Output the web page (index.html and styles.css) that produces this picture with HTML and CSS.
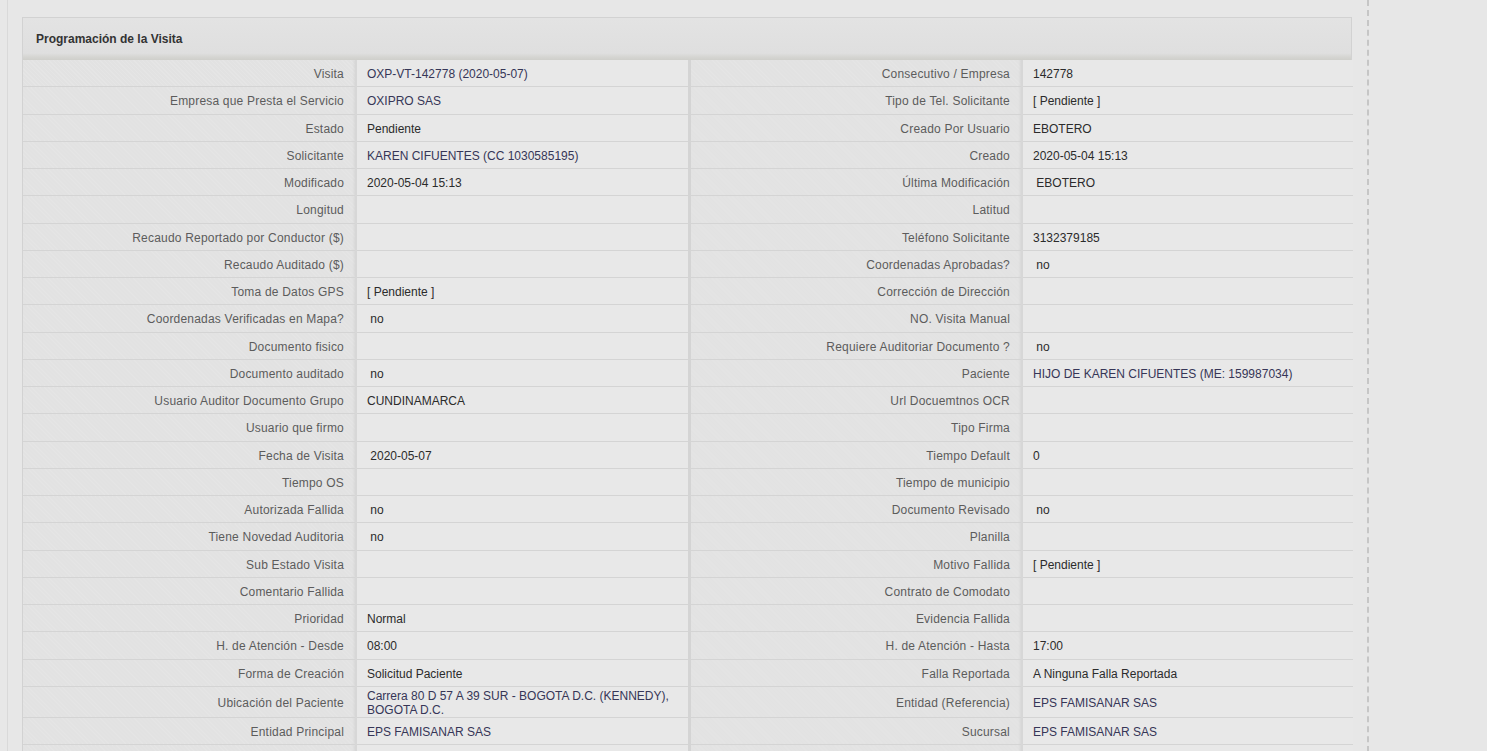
FILE: index.html
```html
<!DOCTYPE html>
<html lang="es">
<head>
    <meta charset="UTF-8">
    <meta name="viewport" content="width=device-width, initial-scale=1.0">
    <title>Programación de la Visita</title>
    <link rel="stylesheet" href="styles.css">
</head>
<body>
    <div class="page">
        <div class="panel">
            <div class="panel-header">Programación de la Visita</div>
            <table class="detail">
                <colgroup>
                    <col class="c1"><col class="c2"><col class="c3"><col class="c4">
                </colgroup>
                <tr>
                    <th>Visita</th><td class="link">OXP-VT-142778 (2020-05-07)</td>
                    <th>Consecutivo / Empresa</th><td>142778</td>
                </tr>
                <tr>
                    <th>Empresa que Presta el Servicio</th><td class="link">OXIPRO SAS</td>
                    <th>Tipo de Tel. Solicitante</th><td>[ Pendiente ]</td>
                </tr>
                <tr>
                    <th>Estado</th><td>Pendiente</td>
                    <th>Creado Por Usuario</th><td>EBOTERO</td>
                </tr>
                <tr>
                    <th>Solicitante</th><td class="link">KAREN CIFUENTES (CC 1030585195)</td>
                    <th>Creado</th><td>2020-05-04 15:13</td>
                </tr>
                <tr>
                    <th>Modificado</th><td>2020-05-04 15:13</td>
                    <th>Última Modificación</th><td>&nbsp;EBOTERO</td>
                </tr>
                <tr>
                    <th>Longitud</th><td></td>
                    <th>Latitud</th><td></td>
                </tr>
                <tr>
                    <th>Recaudo Reportado por Conductor ($)</th><td></td>
                    <th>Teléfono Solicitante</th><td>3132379185</td>
                </tr>
                <tr>
                    <th>Recaudo Auditado ($)</th><td></td>
                    <th>Coordenadas Aprobadas?</th><td>&nbsp;no</td>
                </tr>
                <tr>
                    <th>Toma de Datos GPS</th><td>[ Pendiente ]</td>
                    <th>Corrección de Dirección</th><td></td>
                </tr>
                <tr>
                    <th>Coordenadas Verificadas en Mapa?</th><td>&nbsp;no</td>
                    <th>NO. Visita Manual</th><td></td>
                </tr>
                <tr>
                    <th>Documento fisico</th><td></td>
                    <th>Requiere Auditoriar Documento ?</th><td>&nbsp;no</td>
                </tr>
                <tr>
                    <th>Documento auditado</th><td>&nbsp;no</td>
                    <th>Paciente</th><td class="link">HIJO DE KAREN CIFUENTES (ME: 159987034)</td>
                </tr>
                <tr>
                    <th>Usuario Auditor Documento Grupo</th><td>CUNDINAMARCA</td>
                    <th>Url Docuemtnos OCR</th><td></td>
                </tr>
                <tr>
                    <th>Usuario que firmo</th><td></td>
                    <th>Tipo Firma</th><td></td>
                </tr>
                <tr>
                    <th>Fecha de Visita</th><td>&nbsp;2020-05-07</td>
                    <th>Tiempo Default</th><td>0</td>
                </tr>
                <tr>
                    <th>Tiempo OS</th><td></td>
                    <th>Tiempo de municipio</th><td></td>
                </tr>
                <tr>
                    <th>Autorizada Fallida</th><td>&nbsp;no</td>
                    <th>Documento Revisado</th><td>&nbsp;no</td>
                </tr>
                <tr>
                    <th>Tiene Novedad Auditoria</th><td>&nbsp;no</td>
                    <th>Planilla</th><td></td>
                </tr>
                <tr>
                    <th>Sub Estado Visita</th><td></td>
                    <th>Motivo Fallida</th><td>[ Pendiente ]</td>
                </tr>
                <tr>
                    <th>Comentario Fallida</th><td></td>
                    <th>Contrato de Comodato</th><td></td>
                </tr>
                <tr>
                    <th>Prioridad</th><td>Normal</td>
                    <th>Evidencia Fallida</th><td></td>
                </tr>
                <tr>
                    <th>H. de Atención - Desde</th><td>08:00</td>
                    <th>H. de Atención - Hasta</th><td>17:00</td>
                </tr>
                <tr>
                    <th>Forma de Creación</th><td>Solicitud Paciente</td>
                    <th>Falla Reportada</th><td>A Ninguna Falla Reportada</td>
                </tr>
                <tr>
                    <th>Ubicación del Paciente</th><td class="link">Carrera 80 D 57 A 39 SUR - BOGOTA D.C. (KENNEDY), BOGOTA D.C.</td>
                    <th>Entidad (Referencia)</th><td class="link">EPS FAMISANAR SAS</td>
                </tr>
                <tr>
                    <th>Entidad Principal</th><td class="link">EPS FAMISANAR SAS</td>
                    <th>Sucursal</th><td class="link">EPS FAMISANAR SAS</td>
                </tr>
                <tr>
                    <th></th><td></td>
                    <th></th><td></td>
                </tr>
            </table>
        </div>
    </div>
</body>
</html>
```

FILE: styles.css
```css
body {
    font-family: "Liberation Sans", Arial, sans-serif;
    font-size: 12px;
    margin: 0;
    padding: 0;
    background-color: #e7e7e7;
    color: #333;
    overflow: hidden;
}
.page {
    margin-left: 7px;
    width: 1330px;
    min-height: 751px;
    padding: 17px 15px 0 14px;
    border-left: 1px solid #d9d9d9;
    border-right: 2px dashed #c6c6c6;
    box-sizing: content-box;
}
.panel {
    border: 1px solid #d2d2d2;
    border-bottom: none;
    background-color: #e6e6e6;
}
.panel-header {
    height: 42px;
    line-height: 42px;
    padding-left: 13px;
    font-weight: bold;
    color: #333;
    background: linear-gradient(to bottom, #e3e3e3 0%, #dfdfdf 84%, #d6d6d3 92%, #cfcfcb 100%);
}
.detail {
    width: 1330px;
    table-layout: fixed;
    border-collapse: collapse;
}
.c1 { width: 333px; }
.c2 { width: 333px; }
.c3 { width: 333px; }
.c4 { width: 331px; }
.detail th,
.detail td {
    height: 24.25px;
    padding: 2px 11px 0;
    line-height: 14px;
    border-bottom: 1px solid #d4d4d4;
    vertical-align: middle;
}
.detail th {
    font-weight: normal;
    text-align: right;
    letter-spacing: 0.2px;
    color: #5c5c5c;
    background-color: #e2e2e2;
    background-image: repeating-linear-gradient(45deg, rgba(255,255,255,0.1) 0, rgba(255,255,255,0.1) 1px, transparent 1px, transparent 3px);
    border-right: 2px solid #d7d7d7;
    box-shadow: inset -3px 0 3px -2px rgba(0,0,0,0.05);
}
.detail td {
    color: #2b2b2b;
    background-color: #e8e8e8;
    padding-left: 10px;
}
.detail td:nth-child(2) {
    border-right: 3px solid #d4d4d4;
}
.detail td.link {
    color: #363657;
}
```
